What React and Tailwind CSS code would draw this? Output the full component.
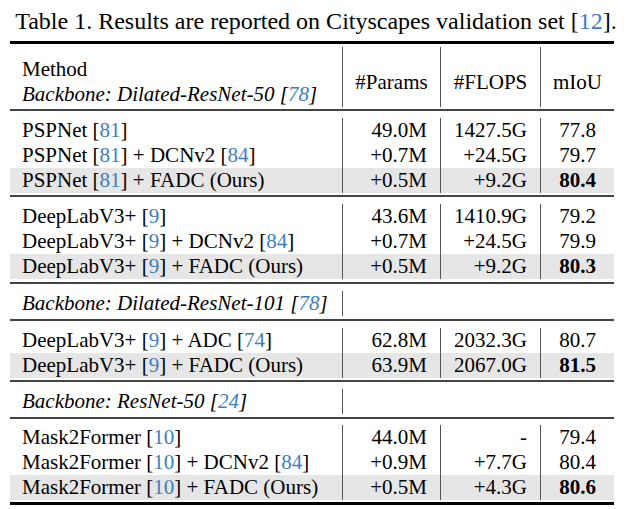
import React from 'react';

const Cite = ({ n }) => (
  <>
    [<span className="text-[#3b7fc2]">{n}</span>]
  </>
);

const COLS = 'grid grid-cols-[332px_98px_100px_74px]';

const groups = [
  {
    rows: [
      { method: <>PSPNet <Cite n="81" /></>, params: '49.0M', flops: '1427.5G', miou: '77.8' },
      { method: <>PSPNet <Cite n="81" /> + DCNv2 <Cite n="84" /></>, params: '+0.7M', flops: '+24.5G', miou: '79.7' },
      { method: <>PSPNet <Cite n="81" /> + FADC (Ours)</>, params: '+0.5M', flops: '+9.2G', miou: '80.4', ours: true },
    ],
  },
  {
    rows: [
      { method: <>DeepLabV3+ <Cite n="9" /></>, params: '43.6M', flops: '1410.9G', miou: '79.2' },
      { method: <>DeepLabV3+ <Cite n="9" /> + DCNv2 <Cite n="84" /></>, params: '+0.7M', flops: '+24.5G', miou: '79.9' },
      { method: <>DeepLabV3+ <Cite n="9" /> + FADC (Ours)</>, params: '+0.5M', flops: '+9.2G', miou: '80.3', ours: true },
    ],
  },
  {
    backbone: <>Backbone: Dilated-ResNet-101 <Cite n="78" /></>,
    ruleBefore: 'pt-[3px] pb-[7px]',
    ruleAfter: 'pt-[3px] pb-[7px]',
    rows: [
      { method: <>DeepLabV3+ <Cite n="9" /> + ADC <Cite n="74" /></>, params: '62.8M', flops: '2032.3G', miou: '80.7' },
      { method: <>DeepLabV3+ <Cite n="9" /> + FADC (Ours)</>, params: '63.9M', flops: '2067.0G', miou: '81.5', ours: true },
    ],
  },
  {
    backbone: <>Backbone: ResNet-50 <Cite n="24" /></>,
    ruleBefore: 'pt-[2px] pb-[7px]',
    ruleAfter: 'pt-[3px] pb-[6px]',
    rows: [
      { method: <>Mask2Former <Cite n="10" /></>, params: '44.0M', flops: '-', miou: '79.4' },
      { method: <>Mask2Former <Cite n="10" /> + DCNv2 <Cite n="84" /></>, params: '+0.9M', flops: '+7.7G', miou: '80.4' },
      { method: <>Mask2Former <Cite n="10" /> + FADC (Ours)</>, params: '+0.5M', flops: '+4.3G', miou: '80.6', ours: true },
    ],
  },
];

// booktabs-like midrule: a little space above, more below, no vertical lines through it
const MidRule = ({ pad = 'pt-[2px] pb-[7px]' }) => (
  <div className={pad}>
    <div className="h-[2px] bg-[#444]" />
  </div>
);

const DataRow = ({ row }) => (
  <div className={`${COLS} h-[25px] leading-[25px] ${row.ours ? 'bg-[#e6e6e6]' : ''}`}>
    <div className="pl-3 whitespace-nowrap">{row.method}</div>
    <div className="border-l border-[#555] pr-[13px] text-right">{row.params}</div>
    <div className="border-l border-[#555] pr-[13px] text-right">{row.flops}</div>
    <div className={`border-l border-[#555] text-center ${row.ours ? 'font-bold' : ''}`}>{row.miou}</div>
  </div>
);

const BackboneRow = ({ children }) => (
  <div className={`${COLS} h-[25px] leading-[25px]`}>
    <div className="pl-3 whitespace-nowrap italic">{children}</div>
    <div className="col-span-3 border-l border-[#555]" />
  </div>
);

export default function App() {
  return (
    <div className="w-[632px] h-[509px] bg-white text-[21px] text-black font-['Liberation_Serif','Times_New_Roman',serif] overflow-hidden">
      {/* Caption */}
      <div className="h-[41px] pt-[9px] text-center text-[24px] leading-[25px]">
        Table 1. Results are reported on Cityscapes validation set <Cite n="12" />.
      </div>

      <div className="ml-[10px] w-[604px]">
        <div className="h-[3px] bg-black" />

        {/* Header */}
        <div className={`${COLS} mt-[3px] h-[60px] leading-[25px]`}>
          <div className="pl-3 pt-[10px] whitespace-nowrap">
            <div>Method</div>
            <div className="italic">
              Backbone: Dilated-ResNet-50 <Cite n="78" />
            </div>
          </div>
          <div className="flex items-center justify-center border-l border-[#555] pt-[10px]">#Params</div>
          <div className="flex items-center justify-center border-l border-[#555] pt-[10px]">#FLOPS</div>
          <div className="flex items-center justify-center border-l border-[#555] pt-[10px]">mIoU</div>
        </div>

        {groups.map((g, gi) => (
          <React.Fragment key={gi}>
            {g.backbone && (
              <>
                <MidRule pad={g.ruleBefore} />
                <BackboneRow>{g.backbone}</BackboneRow>
              </>
            )}
            <MidRule pad={g.ruleAfter} />
            {g.rows.map((r, ri) => (
              <DataRow key={ri} row={r} />
            ))}
          </React.Fragment>
        ))}

        <div className="pt-[2px]">
          <div className="h-[3px] bg-black" />
        </div>
      </div>
    </div>
  );
}
